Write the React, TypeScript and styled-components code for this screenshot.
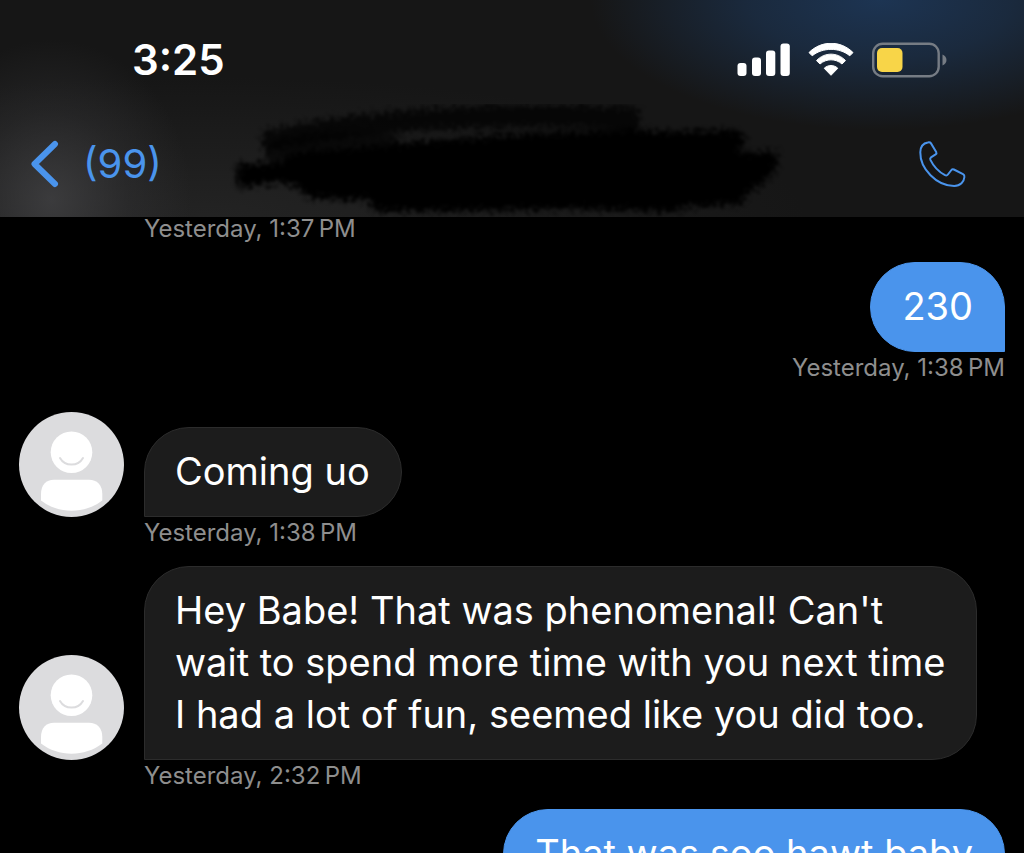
import React from 'react';
import styled, { createGlobalStyle, css } from 'styled-components';

const GlobalStyle = createGlobalStyle`
  * { box-sizing: border-box; }
  html, body { margin: 0; padding: 0; background: #000; }
  body { font-family: Inter, 'Liberation Sans', sans-serif; color: #fff; }
`;

const Screen = styled.div`
  display: flex;
  flex-direction: column;
  height: 100vh;
  overflow: hidden;
  background: #000;
`;

const Header = styled.header`
  flex: none;
  overflow: hidden;
  background:
    radial-gradient(ellipse 290px 130px at 86% 0, rgba(29, 54, 86, 0.95), rgba(28, 50, 78, 0.7) 45%, rgba(23, 23, 23, 0) 100%),
    radial-gradient(ellipse 140px 160px at 5% 92%, rgba(66, 66, 68, 0.8), rgba(54, 54, 56, 0.4) 55%, rgba(23, 23, 23, 0) 100%),
    radial-gradient(ellipse 600px 140px at 20% 100%, rgba(44, 44, 44, 0.6), rgba(23, 23, 23, 0) 100%),
    #161616;
`;

const StatusBar = styled.div`
  display: flex;
  align-items: center;
  justify-content: space-between;
  height: 111px;
  padding: 9px 77px 0 132px;
`;

const Clock = styled.time`
  font-size: 42px;
  line-height: 44px;
  font-weight: 600;
`;

const StatusIcons = styled.div`
  display: flex;
  align-items: center;
  gap: 18px;

  svg { display: block; }
`;

const NavBar = styled.nav`
  display: grid;
  grid-template-columns: 1fr 600px 1fr;
  align-items: center;
  height: 106px;
  padding: 0 58px 0 30px;
`;

const NavButton = styled.button<{ $end?: boolean }>`
  display: flex;
  align-items: center;
  gap: 23px;
  justify-self: ${(p) => (p.$end ? 'end' : 'start')};
  padding: 0;
  border: 0;
  background: none;
  color: #4a94ec;
  font: inherit;
  font-size: 40px;
  line-height: 48px;
  cursor: pointer;

  svg { display: block; }
`;

const Redaction = styled.svg`
  display: block;
  margin: -7px 0;
`;

const Thread = styled.ol`
  display: flex;
  flex-direction: column;
  gap: 21px;
  flex: 1;
  min-height: 0;
  margin: 0;
  padding: 0 19px;
  list-style: none;
`;

const Message = styled.li<{ $mine?: boolean; $first?: boolean }>`
  display: grid;
  flex: none;
  grid-template-columns: ${(p) => (p.$mine ? '1fr' : '105px 1fr')};
  column-gap: 20px;
  align-items: end;
  justify-items: ${(p) => (p.$mine ? 'end' : 'start')};
  margin-top: ${(p) => (p.$first ? '11px' : '0')};
`;

const Bubble = styled.p<{ $mine?: boolean }>`
  margin: 0;
  padding: 17px 31px 19px;
  max-width: 860px;
  font-size: 38px;
  line-height: 52px;
  white-space: pre-line;
  ${(p) =>
    p.$mine
      ? css`
          border: 1px solid #4a94ec;
          border-radius: 45px 45px 0 45px;
          background: #4a94ec;
        `
      : css`
          padding-left: 30px;
          border: 1px solid #2c2c2c;
          border-radius: 45px 45px 45px 0;
          background: #1c1c1c;
        `}
`;

const Stamp = styled.time<{ $mine?: boolean; $alone?: boolean }>`
  grid-column: ${(p) => (p.$mine ? 1 : 2)};
  margin-top: ${(p) => (p.$alone ? '0' : '4px')};
  color: #8e8e8e;
  font-size: 24px;
  line-height: 24px;
`;

const SignalIcon = () => (
  <svg width="53" height="34" viewBox="0 0 53 34" fill="#fff" aria-hidden="true">
    <rect x="0.5" y="20" width="9" height="13" rx="3" />
    <rect x="15" y="14.5" width="9" height="18.5" rx="3" />
    <rect x="29" y="7.5" width="9.3" height="25.5" rx="3" />
    <rect x="43.5" y="0.5" width="9.3" height="32.5" rx="3" />
  </svg>
);

const WifiIcon = () => (
  <svg width="46" height="34" viewBox="0 0 46 34" fill="#fff" stroke="#fff" strokeLinejoin="round" aria-hidden="true">
    <path d="M1 9.6C13-2.8 33-2.8 45 9.6L41.8 12.8C31.2 4.2 14.8 4.2 4.2 12.8Z" />
    <path d="M8.5 17.6C16.5 9 29.5 9 37.5 17.6L34 21C27.5 15.4 18.5 15.4 12 21Z" />
    <path d="M16.2 25.3C20 21.6 26 21.6 29.8 25.3L23 32.3Z" />
  </svg>
);

const BatteryIcon = () => (
  <svg width="75" height="36" viewBox="0 0 75 36" aria-hidden="true">
    <rect x="1.2" y="1.7" width="65.5" height="32.6" rx="9.5" fill="none" stroke="#767c84" strokeWidth="2.4" />
    <rect x="5" y="6" width="25.5" height="24" rx="5" fill="#f8d548" />
    <path d="M70.5 12.5C73 13.4 74.5 15.5 74.5 18S73 22.6 70.5 23.5Z" fill="#767c84" />
  </svg>
);

const BackIcon = () => (
  <svg width="30" height="48" viewBox="0 0 30 48" fill="none" stroke="currentColor" strokeWidth="6" strokeLinecap="round" strokeLinejoin="round" aria-hidden="true">
    <path d="M25 4L4.5 24L25 44" />
  </svg>
);

const PhoneIcon = () => (
  <svg width="48" height="48" viewBox="0 0 48 48" fill="none" stroke="currentColor" strokeWidth="2" strokeLinejoin="round" aria-hidden="true">
    <path d="M9.8 2.5C11.2 2.2 12.3 2.3 13 3.4L18.2 11.9C18.7 12.9 18.4 13.8 17.6 14.4L13 17.4C12.1 18.1 12 19 12.4 19.9C15.5 26.3 20.5 31.8 27 35.1C28.2 35.7 29.2 35.4 29.9 34.5L33.4 30C34 29.2 34.9 29 35.9 29.5L45 34.2C46.2 34.9 46.6 35.7 46.4 37C46 41.8 42.5 46 36.2 46C18.5 45.8 2 28.6 2.3 12.2C2.5 6.7 5.1 3.2 9.8 2.5Z" />
  </svg>
);

const ScribbledName = () => (
  <Redaction width="600" height="120" viewBox="0 0 600 120" aria-hidden="true">
    <defs>
      <filter id="marker" x="-5%" y="-20%" width="110%" height="140%">
        <feTurbulence type="fractalNoise" baseFrequency="0.22" numOctaves="4" seed="7" result="noise" />
        <feGaussianBlur in="SourceGraphic" stdDeviation="2.5" result="soft" />
        <feDisplacementMap in="soft" in2="noise" scale="18" xChannelSelector="R" yChannelSelector="G" />
        <feGaussianBlur stdDeviation="1.5" />
      </filter>
    </defs>
    <g filter="url(#marker)">
      <path d="M76 36C160 16 300 8 430 14" fill="none" stroke="#000" strokeOpacity="0.75" strokeWidth="22" strokeLinecap="square" />
      <path d="M78 48C110 38 150 38 190 42" fill="none" stroke="#000" strokeOpacity="0.65" strokeWidth="22" strokeLinecap="square" />
      <path
        d="M38 60L84 59L92 48L150 44L220 37L330 29L430 25L478 28L540 25L548 36L540 48L580 48L578 66L564 80L550 88L544 100L490 103L474 108L380 105L300 107L176 108L172 96L150 96L112 94L98 84L84 78L40 84Z"
        fill="#000"
      />
    </g>
  </Redaction>
);

const Avatar = () => (
  <svg width="105" height="105" viewBox="0 0 105 105" aria-hidden="true">
    <circle cx="52.5" cy="52.5" r="52.5" fill="#dcdcde" />
    <circle cx="52.5" cy="40.3" r="20.8" fill="#fff" />
    <path d="M41 46C46 54.8 59 54.8 64 46" fill="none" stroke="#dcdcde" strokeWidth="2" strokeLinecap="round" />
    <path d="M22 82C22 73 27 67.8 35 67.8H70C78 67.8 83.3 73 83.3 82V88.5C66 102 39 102 22 88.5Z" fill="#fff" />
  </svg>
);

interface Entry {
  text?: string;
  time?: string;
  mine?: boolean;
  first?: boolean;
}

const entries: Entry[] = [
  { time: 'Yesterday, 1:37\u2009PM' },
  { text: '230', time: 'Yesterday, 1:38\u2009PM', mine: true },
  { text: 'Coming uo', time: 'Yesterday, 1:38\u2009PM', first: true },
  {
    text: "Hey Babe! That was phenomenal! Can't\nwait to spend more time with you next time\nI had a lot of fun, seemed like you did too.",
    time: 'Yesterday, 2:32\u2009PM',
  },
  { text: 'That was soo hawt baby', mine: true },
];

export default function App() {
  return (
    <Screen>
      <GlobalStyle />
      <Header>
        <StatusBar>
          <Clock>3:25</Clock>
          <StatusIcons>
            <SignalIcon />
            <WifiIcon />
            <BatteryIcon />
          </StatusIcons>
        </StatusBar>
        <NavBar>
          <NavButton type="button">
            <BackIcon />
            (99)
          </NavButton>
          <ScribbledName />
          <NavButton type="button" aria-label="Call" $end>
            <PhoneIcon />
          </NavButton>
        </NavBar>
      </Header>
      <Thread>
        {entries.map((entry, i) => (
          <Message key={i} $mine={entry.mine} $first={entry.first}>
            {entry.text && !entry.mine && <Avatar />}
            {entry.text && <Bubble $mine={entry.mine}>{entry.text}</Bubble>}
            {entry.time && (
              <Stamp $mine={entry.mine} $alone={!entry.text}>
                {entry.time}
              </Stamp>
            )}
          </Message>
        ))}
      </Thread>
    </Screen>
  );
}
